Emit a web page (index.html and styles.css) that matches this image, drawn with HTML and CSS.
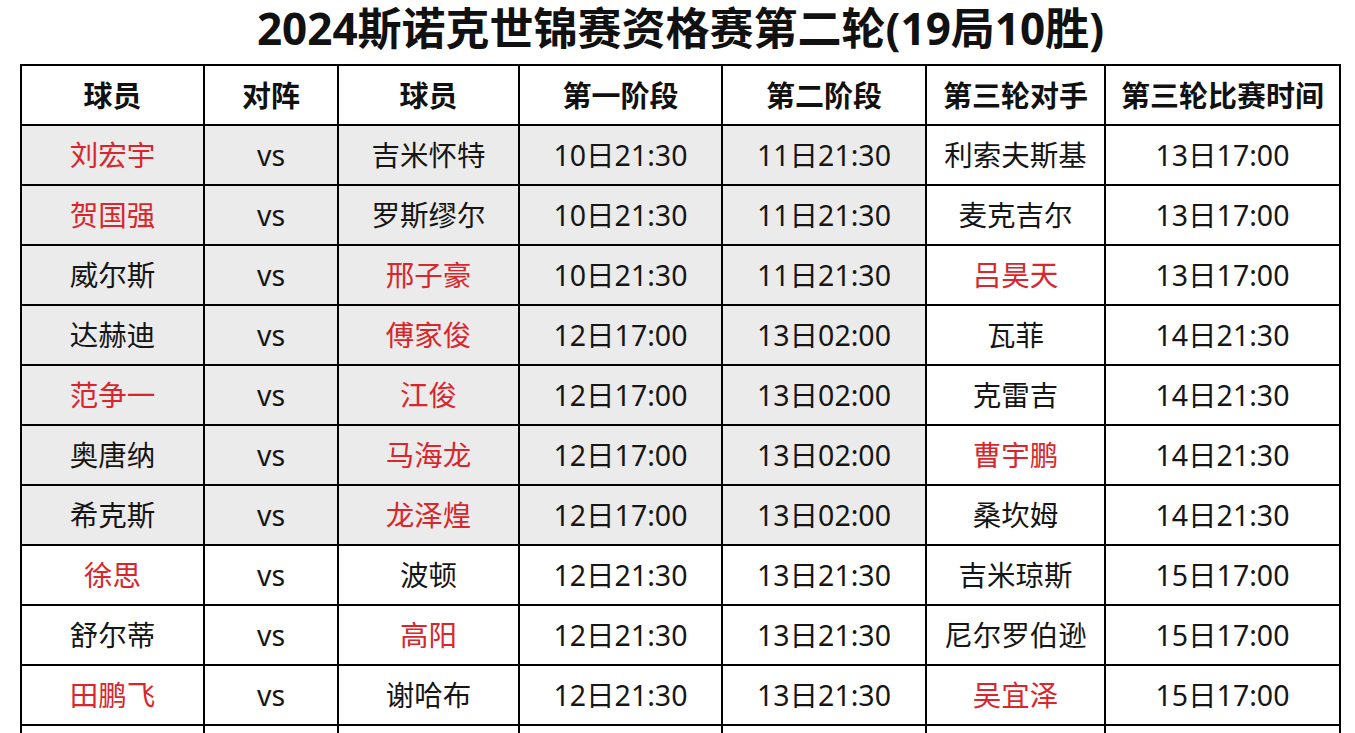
FILE: index.html
```html
<!DOCTYPE html>
<html lang="zh-CN">
<head>
<meta charset="utf-8">
<title>2024斯诺克世锦赛资格赛第二轮</title>
<link rel="stylesheet" href="styles.css">
</head>
<body>
<h1 class="title">2024斯诺克世锦赛资格赛第二轮(19局10胜)</h1>
<table class="schedule">
  <colgroup>
    <col class="c1"><col class="c2"><col class="c3"><col class="c4"><col class="c5"><col class="c6"><col class="c7">
  </colgroup>
  <thead>
    <tr><th>球员</th><th>对阵</th><th>球员</th><th>第一阶段</th><th>第二阶段</th><th>第三轮对手</th><th>第三轮比赛时间</th></tr>
  </thead>
  <tbody>
    <tr class="shade"><td class="red">刘宏宇</td><td>vs</td><td>吉米怀特</td><td>10日21:30</td><td>11日21:30</td><td>利索夫斯基</td><td>13日17:00</td></tr>
    <tr class="shade"><td class="red">贺国强</td><td>vs</td><td>罗斯缪尔</td><td>10日21:30</td><td>11日21:30</td><td>麦克吉尔</td><td>13日17:00</td></tr>
    <tr class="shade"><td>威尔斯</td><td>vs</td><td class="red">邢子豪</td><td>10日21:30</td><td>11日21:30</td><td class="red">吕昊天</td><td>13日17:00</td></tr>
    <tr class="shade"><td>达赫迪</td><td>vs</td><td class="red">傅家俊</td><td>12日17:00</td><td>13日02:00</td><td>瓦菲</td><td>14日21:30</td></tr>
    <tr class="shade"><td class="red">范争一</td><td>vs</td><td class="red">江俊</td><td>12日17:00</td><td>13日02:00</td><td>克雷吉</td><td>14日21:30</td></tr>
    <tr class="shade"><td>奥唐纳</td><td>vs</td><td class="red">马海龙</td><td>12日17:00</td><td>13日02:00</td><td class="red">曹宇鹏</td><td>14日21:30</td></tr>
    <tr class="shade"><td>希克斯</td><td>vs</td><td class="red">龙泽煌</td><td>12日17:00</td><td>13日02:00</td><td>桑坎姆</td><td>14日21:30</td></tr>
    <tr><td class="red">徐思</td><td>vs</td><td>波顿</td><td>12日21:30</td><td>13日21:30</td><td>吉米琼斯</td><td>15日17:00</td></tr>
    <tr><td>舒尔蒂</td><td>vs</td><td class="red">高阳</td><td>12日21:30</td><td>13日21:30</td><td>尼尔罗伯逊</td><td>15日17:00</td></tr>
    <tr><td class="red">田鹏飞</td><td>vs</td><td>谢哈布</td><td>12日21:30</td><td>13日21:30</td><td class="red">吴宜泽</td><td>15日17:00</td></tr>
    <tr><td></td><td></td><td></td><td></td><td></td><td></td><td></td></tr>
  </tbody>
</table>
</body>
</html>
```
FILE: styles.css
```css
html, body {
  margin: 0;
  padding: 0;
  background: #ffffff;
}

body {
  font-family: "Noto Sans", "Noto Sans CJK SC", sans-serif;
  color: #161616;
}

.title {
  margin: 0;
  height: 64px;
  line-height: 56px;
  font-size: 44px;
  font-weight: 700;
  text-align: center;
  padding-left: 6px;
  color: #111111;
  letter-spacing: 0;
}

.schedule {
  margin-left: 20px;
  border-collapse: separate;
  border-spacing: 2px;
  background: #000000;
  table-layout: fixed;
  width: 1321px;
}

.c1 { width: 181px; }
.c2 { width: 132px; }
.c3 { width: 179px; }
.c4 { width: 201px; }
.c5 { width: 202px; }
.c6 { width: 177px; }
.c7 { width: 233px; }

.schedule th,
.schedule td {
  height: 58px;
  padding: 0;
  background: #ffffff;
  text-align: center;
  vertical-align: middle;
  line-height: 1;
  white-space: nowrap;
  overflow: hidden;
}

.schedule th {
  font-size: 29px;
  font-weight: 700;
  color: #111111;
}

.schedule td {
  font-size: 28.5px;
  font-weight: 400;
}

.shade td:nth-child(-n+5) {
  background: #ebebeb;
}

.schedule td.red {
  color: #d8262c;
}
```
